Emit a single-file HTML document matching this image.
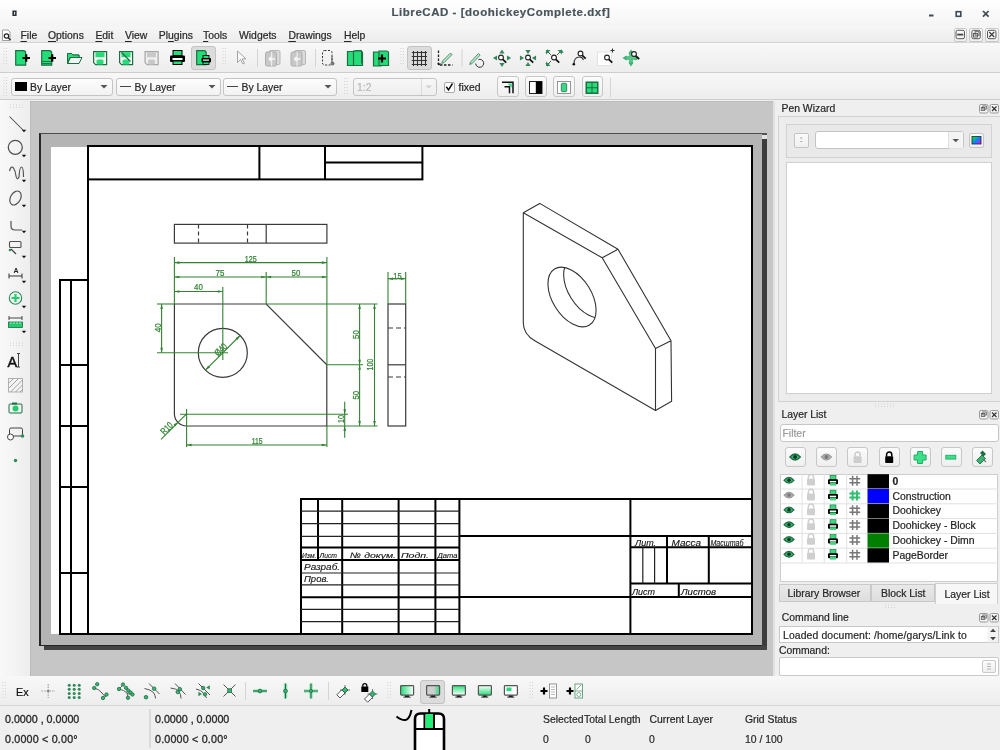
<!DOCTYPE html>
<html><head><meta charset="utf-8">
<style>
*{margin:0;padding:0;box-sizing:border-box}
html,body{width:1000px;height:750px;overflow:hidden;background:#efefef;font-family:"Liberation Sans",sans-serif;font-size:10.4px;color:#262626}
.a{position:absolute}
.t{position:absolute;white-space:pre;line-height:1;will-change:opacity;opacity:0.999;-webkit-text-stroke:0.2px currentColor}
u{text-decoration:underline;text-underline-offset:1.5px}
svg{position:absolute;left:0;top:0}
</style></head><body>
<div class="a" style="left:0px;top:0px;width:1000px;height:27px;background:linear-gradient(#ffffff,#f4f4f4)"></div>
<div class="a" style="left:0px;top:27px;width:1000px;height:16px;background:linear-gradient(#f6f6f6,#ececec);border-bottom:1px solid #d4d4d4"></div>
<div class="a" style="left:0px;top:43px;width:1000px;height:30px;background:linear-gradient(#f8f8f8,#ededed);border-bottom:1px solid #cdcdcd"></div>
<div class="a" style="left:0px;top:73px;width:1000px;height:27px;background:linear-gradient(#f8f8f8,#ededed);border-bottom:1px solid #cdcdcd"></div>
<div class="a" style="left:0px;top:100px;width:30px;height:576px;background:linear-gradient(90deg,#f9f9f9,#ededed)"></div>
<div class="a" style="left:30px;top:101px;width:743px;height:575px;background:#c6c6c6;border-left:1px solid #b9b9b9;border-top:1px solid #bdbdbd"></div>
<div class="a" style="left:773px;top:100px;width:227px;height:576px;background:#efefef"></div>
<div class="a" style="left:0px;top:676px;width:1000px;height:30px;background:linear-gradient(#f8f8f8,#ededed);border-bottom:1px solid #d0d0d0"></div>
<div class="a" style="left:0px;top:706px;width:1000px;height:44px;background:#efefef"></div>
<div class="t" style="left:391.5px;top:7.3px;font-size:11.5px;font-weight:bold;color:#48535b;letter-spacing:0.54px">LibreCAD - [doohickeyComplete.dxf]</div>
<div class="t" style="left:20.5px;top:30.6px;"><u>F</u>ile</div>
<div class="t" style="left:48px;top:30.6px;"><u>O</u>ptions</div>
<div class="t" style="left:95.4px;top:30.6px;"><u>E</u>dit</div>
<div class="t" style="left:125px;top:30.6px;"><u>V</u>iew</div>
<div class="t" style="left:158.8px;top:30.6px;">Pl<u>u</u>gins</div>
<div class="t" style="left:203px;top:30.6px;"><u>T</u>ools</div>
<div class="t" style="left:239px;top:30.6px;">Widgets</div>
<div class="t" style="left:288.4px;top:30.6px;"><u>D</u>rawings</div>
<div class="t" style="left:344px;top:30.6px;"><u>H</u>elp</div>
<div class="a" style="left:953.5px;top:27.5px;width:13.5px;height:14px;border:1px solid #c8c8c8;border-radius:2px;background:linear-gradient(#fdfdfd,#efefef)"></div>
<div class="a" style="left:969.3px;top:27.5px;width:13.5px;height:14px;border:1px solid #c8c8c8;border-radius:2px;background:linear-gradient(#fdfdfd,#efefef)"></div>
<div class="a" style="left:985px;top:27.5px;width:13.5px;height:14px;border:1px solid #c8c8c8;border-radius:2px;background:linear-gradient(#fdfdfd,#efefef)"></div>
<div class="a" style="left:190.5px;top:46.3px;width:25px;height:24px;border:1px solid #c3c3c3;border-radius:3px;background:#dcdcdc"></div>
<div class="a" style="left:407.3px;top:46.3px;width:24.5px;height:23.5px;border:1px solid #c3c3c3;border-radius:3px;background:#dcdcdc"></div>
<div class="a" style="left:10.8px;top:77.5px;width:102.5px;height:18.2px;border:1px solid #c4c4c4;border-radius:3px;background:linear-gradient(#fdfdfd,#f2f2f2)"></div>
<div class="a" style="left:15px;top:82px;width:12px;height:9px;background:#000"></div>
<div class="t" style="left:30px;top:82.7px;">By Layer</div>
<div class="a" style="left:115.5px;top:77.5px;width:105px;height:18.2px;border:1px solid #c4c4c4;border-radius:3px;background:linear-gradient(#fdfdfd,#f2f2f2)"></div>
<div class="t" style="left:134.5px;top:82.7px;">By Layer</div>
<div class="a" style="left:222.5px;top:77.5px;width:114.5px;height:18.2px;border:1px solid #c4c4c4;border-radius:3px;background:linear-gradient(#fdfdfd,#f2f2f2)"></div>
<div class="t" style="left:241.5px;top:82.7px;">By Layer</div>
<div class="a" style="left:352.6px;top:78.3px;width:84px;height:17.5px;border:1px solid #c4c4c4;border-radius:3px;background:linear-gradient(#f7f7f7,#eeeeee)"></div>
<div class="t" style="left:357px;top:82.5px;color:#b9b9b9">1:2</div>
<div class="a" style="left:444px;top:81.5px;width:11px;height:11px;border:1px solid #a9a9a9;border-radius:2px;background:#fff"></div>
<div class="t" style="left:458.5px;top:82.5px;">fixed</div>
<div class="a" style="left:497.4px;top:76.3px;width:21.2px;height:21px;border:1px solid #c7c7c7;border-radius:3px;background:linear-gradient(#fbfbfb,#f0f0f0)"></div>
<div class="a" style="left:525.4px;top:76.3px;width:21.2px;height:21px;border:1px solid #c7c7c7;border-radius:3px;background:linear-gradient(#fbfbfb,#f0f0f0)"></div>
<div class="a" style="left:553.4px;top:76.3px;width:21.2px;height:21px;border:1px solid #c7c7c7;border-radius:3px;background:linear-gradient(#fbfbfb,#f0f0f0)"></div>
<div class="a" style="left:581.5px;top:76.3px;width:21.2px;height:21px;border:1px solid #c7c7c7;border-radius:3px;background:linear-gradient(#fbfbfb,#f0f0f0)"></div>
<div class="a" style="left:39px;top:133px;width:723px;height:512.5px;background:#b4b4b4;border-left:2px solid #262626;border-top:1.5px solid #4d4d4d;border-bottom:1.5px solid #262626"></div>
<div class="a" style="left:762px;top:139px;width:5px;height:511px;background:#3c3c3c"></div>
<div class="a" style="left:44px;top:645.5px;width:723px;height:4.5px;background:#444"></div>
<div class="a" style="left:762px;top:133px;width:4.5px;height:1.5px;background:#555"></div>
<div class="a" style="left:762px;top:134.5px;width:4.5px;height:4.5px;background:#e2e2e2"></div>
<div class="a" style="left:51px;top:147px;width:701px;height:487px;background:#fff"></div>
<div class="t" style="left:781.5px;top:104px;">Pen Wizard</div>
<div class="a" style="left:778.3px;top:116.3px;width:222px;height:285.5px;border:1px solid #d2d2d2;border-right:none;background:#ececec"></div>
<div class="a" style="left:786.3px;top:123.6px;width:206px;height:34px;border:1px solid #d2d2d2;background:#e9e9e9"></div>
<div class="a" style="left:794px;top:133px;width:14.5px;height:14.5px;border:1px solid #c4c4c4;border-radius:2px;background:linear-gradient(#fbfbfb,#efefef)"></div>
<div class="a" style="left:814.5px;top:131.3px;width:149px;height:18.2px;border:1px solid #c4c4c4;border-radius:3px;background:#fff"></div>
<div class="a" style="left:969.2px;top:132.8px;width:15px;height:15px;border:1px solid #c4c4c4;border-radius:2px;background:linear-gradient(#fbfbfb,#efefef)"></div>
<div class="a" style="left:786.3px;top:162.2px;width:205.5px;height:232.2px;border:1px solid #cfcfcf;background:#fff"></div>
<div class="t" style="left:781.4px;top:410.3px;">Layer List</div>
<div class="a" style="left:780px;top:424px;width:219px;height:17.5px;border:1px solid #c7c7c7;border-radius:3px;background:#fff"></div>
<div class="t" style="left:782.5px;top:428.5px;color:#9a9a9a">Filter</div>
<div class="a" style="left:784.5px;top:446.8px;width:21.2px;height:20.6px;border:1px solid #c7c7c7;border-radius:3px;background:linear-gradient(#fbfbfb,#efefef)"></div>
<div class="a" style="left:815.8px;top:446.8px;width:21.2px;height:20.6px;border:1px solid #c7c7c7;border-radius:3px;background:linear-gradient(#fbfbfb,#efefef)"></div>
<div class="a" style="left:847px;top:446.8px;width:21.2px;height:20.6px;border:1px solid #c7c7c7;border-radius:3px;background:linear-gradient(#fbfbfb,#efefef)"></div>
<div class="a" style="left:878.6px;top:446.8px;width:21.2px;height:20.6px;border:1px solid #c7c7c7;border-radius:3px;background:linear-gradient(#fbfbfb,#efefef)"></div>
<div class="a" style="left:909.5px;top:446.8px;width:21.2px;height:20.6px;border:1px solid #c7c7c7;border-radius:3px;background:linear-gradient(#fbfbfb,#efefef)"></div>
<div class="a" style="left:940.5px;top:446.8px;width:21.2px;height:20.6px;border:1px solid #c7c7c7;border-radius:3px;background:linear-gradient(#fbfbfb,#efefef)"></div>
<div class="a" style="left:972.3px;top:446.8px;width:21.2px;height:20.6px;border:1px solid #c7c7c7;border-radius:3px;background:linear-gradient(#fbfbfb,#efefef)"></div>
<div class="a" style="left:780px;top:473.6px;width:217.5px;height:108px;border:1px solid #cdcdcd;background:#fff"></div>
<div class="t" style="left:892.5px;top:476.8px;font-weight:bold;color:#222">0</div>
<div class="t" style="left:892.5px;top:491.6px;color:#222">Construction</div>
<div class="t" style="left:892.5px;top:506.40000000000003px;color:#222">Doohickey</div>
<div class="t" style="left:892.5px;top:521.2px;color:#222">Doohickey - Block</div>
<div class="t" style="left:892.5px;top:536.0px;color:#222">Doohickey - Dimn</div>
<div class="t" style="left:892.5px;top:550.8000000000001px;color:#222">PageBorder</div>
<div class="a" style="left:778.5px;top:584px;width:92.5px;height:17.5px;border:1px solid #c9c9c9;background:linear-gradient(#e9e9e9,#dedede)"></div>
<div class="a" style="left:871px;top:584px;width:64px;height:17.5px;border:1px solid #c9c9c9;background:linear-gradient(#e9e9e9,#dedede)"></div>
<div class="a" style="left:935px;top:583px;width:63px;height:21px;border:1px solid #cfcfcf;border-bottom:none;background:#f7f7f7"></div>
<div class="t" style="left:787.5px;top:589px;">Library Browser</div>
<div class="t" style="left:881px;top:589px;">Block List</div>
<div class="t" style="left:944.5px;top:590px;">Layer List</div>
<div class="t" style="left:781.8px;top:612.9px;">Command line</div>
<div class="a" style="left:779px;top:626px;width:219.5px;height:17px;border:1px solid #c9c9c9;background:#fff"></div>
<div class="t" style="left:783px;top:630.8px;letter-spacing:0.12px">Loaded document: /home/garys/Link to</div>
<div class="t" style="left:779px;top:646px;">Command:</div>
<div class="a" style="left:779px;top:657px;width:219.5px;height:18.5px;border:1px solid #c9c9c9;border-radius:2px;background:#fff"></div>
<div class="a" style="left:982px;top:660px;width:14px;height:13px;border:1px solid #c9c9c9;border-radius:2px;background:linear-gradient(#fbfbfb,#efefef)"></div>
<div class="t" style="left:16px;top:686.5px;font-size:10.8px;color:#111">Ex</div>
<div class="a" style="left:420.4px;top:680px;width:24.6px;height:23.5px;border:1px solid #c3c3c3;border-radius:3px;background:#dcdcdc"></div>
<div class="t" style="left:5px;top:714.2px;font-size:10.7px;color:#2e2e2e;-webkit-text-stroke:0.35px #2e2e2e">0.0000 , 0.0000</div>
<div class="t" style="left:5px;top:733.5px;font-size:10.7px;color:#2e2e2e;-webkit-text-stroke:0.35px #2e2e2e;letter-spacing:0.2px">0.0000 &lt; 0.00°</div>
<div class="t" style="left:155px;top:714.2px;font-size:10.7px;color:#2e2e2e;-webkit-text-stroke:0.35px #2e2e2e">0.0000 , 0.0000</div>
<div class="t" style="left:155px;top:733.5px;font-size:10.7px;color:#2e2e2e;-webkit-text-stroke:0.35px #2e2e2e;letter-spacing:0.2px">0.0000 &lt; 0.00°</div>
<div class="t" style="left:543px;top:714.5px;font-size:10.4px;color:#262626">Selected</div>
<div class="t" style="left:584px;top:714.5px;font-size:10.4px;color:#262626">Total Length</div>
<div class="t" style="left:649.5px;top:714.5px;font-size:10.4px;color:#262626">Current Layer</div>
<div class="t" style="left:745px;top:714.5px;font-size:10.4px;color:#262626">Grid Status</div>
<div class="t" style="left:543px;top:734.5px;font-size:10.4px;color:#262626">0</div>
<div class="t" style="left:585px;top:734.5px;font-size:10.4px;color:#262626">0</div>
<div class="t" style="left:649px;top:734.5px;font-size:10.4px;color:#262626">0</div>
<div class="t" style="left:745px;top:734.5px;font-size:10.4px;color:#262626">10 / 100</div>
<svg width="1000" height="750" viewBox="0 0 1000 750">
<rect x="12.4" y="10.5" width="4.2" height="5.5" fill="#2b3035"/><rect x="14" y="12" width="1.1" height="2.6" fill="#ddd"/>
<rect x="929" y="14.5" width="4.5" height="2" fill="#3f4a52"/>
<rect x="956.2" y="11.7" width="4.6" height="4.6" fill="none" stroke="#3f4a52" stroke-width="1.6"/>
<path d="M983,11 L988.6,16.6 M988.6,11 L983,16.6" stroke="#3f4a52" stroke-width="1.7"/>
<path d="M2.5,30 h5.5 l2,2 v8.5 h-7.5 z" fill="#fff" stroke="#888" stroke-width="0.8"/>
<circle cx="6.5" cy="36" r="2.2" fill="none" stroke="#222" stroke-width="1.2"/><path d="M8,37.5 l2.5,2.5" stroke="#222" stroke-width="1.4"/>
<rect x="956.05" y="30.3" width="8.4" height="8.4" rx="1.5" fill="none" stroke="#555" stroke-width="1"/>
<rect x="957.25" y="33.7" width="6" height="1.8" fill="#444"/>
<rect x="971.8499999999999" y="30.3" width="8.4" height="8.4" rx="1.5" fill="none" stroke="#555" stroke-width="1"/>
<rect x="973.55" y="33.5" width="4" height="3.5" fill="none" stroke="#555" stroke-width="0.9"/><rect x="975.05" y="31.7" width="4" height="3.5" fill="none" stroke="#555" stroke-width="0.9"/>
<rect x="987.55" y="30.3" width="8.4" height="8.4" rx="1.5" fill="none" stroke="#555" stroke-width="1"/>
<path d="M989.25,32.0 L994.25,37.0 M994.25,32.0 L989.25,37.0" stroke="#444" stroke-width="1.3"/>
<rect x="3.5" y="48" width="1" height="1" fill="#d2d2d2"/><rect x="6" y="48" width="1" height="1" fill="#d2d2d2"/>
<rect x="3.5" y="51" width="1" height="1" fill="#d2d2d2"/><rect x="6" y="51" width="1" height="1" fill="#d2d2d2"/>
<rect x="3.5" y="54" width="1" height="1" fill="#d2d2d2"/><rect x="6" y="54" width="1" height="1" fill="#d2d2d2"/>
<rect x="3.5" y="57" width="1" height="1" fill="#d2d2d2"/><rect x="6" y="57" width="1" height="1" fill="#d2d2d2"/>
<rect x="3.5" y="60" width="1" height="1" fill="#d2d2d2"/><rect x="6" y="60" width="1" height="1" fill="#d2d2d2"/>
<rect x="3.5" y="63" width="1" height="1" fill="#d2d2d2"/><rect x="6" y="63" width="1" height="1" fill="#d2d2d2"/>
<path d="M15.7,50.7 h7.5 q2.5,0 2.5,2.5 v12 h-10 z" fill="#24dd78" stroke="#1d6e43" stroke-width="1.2"/>
<path d="M22.5,58 h7.5 M26.2,54.3 v7.5" stroke="#000" stroke-width="2.2"/>
<path d="M41.7,50.7 h7.5 q2.5,0 2.5,2.5 v12 h-10 z" fill="#24dd78" stroke="#1d6e43" stroke-width="1.2"/>
<path d="M42,61.5 h9 M42,63.5 h9" stroke="#1d6e43" stroke-width="0.9"/>
<path d="M48.5,58 h7.5 M52.2,54.3 v7.5" stroke="#000" stroke-width="2.2"/>
<path d="M67.5,63.5 v-10 h4 l1.5,1.5 h6 v3" fill="#24dd78" stroke="#1d6e43" stroke-width="1"/>
<path d="M67.5,63.5 l3,-6 h11.5 l-3,6 z" fill="#f4f4f4" stroke="#1d6e43" stroke-width="1"/>
<path d="M67.5,63.5 v-10 h4 l1.5,1.5 h6 v2.5 h-9 z" fill="#24dd78" stroke="#1d6e43" stroke-width="1"/>
<path d="M93.6,51.6 h13 v13 h-11 l-2,-2 z" fill="#f4f4f4" stroke="#1d6e43" stroke-width="1.2"/>
<rect x="95.5" y="52.2" width="9" height="5" fill="#24dd78"/>
<rect x="96.5" y="59.5" width="7" height="5" rx="1.5" fill="#24dd78"/>
<path d="M119.6,51.6 h13 v13 h-11 l-2,-2 z" fill="#f4f4f4" stroke="#1d6e43" stroke-width="1.2"/>
<rect x="121.5" y="52.2" width="9" height="5" fill="#24dd78"/>
<rect x="122.5" y="59.5" width="7" height="5" rx="1.5" fill="#24dd78"/>
<path d="M121.5,52.5 l9,9" stroke="#1d6e43" stroke-width="1.2"/>
<path d="M145.1,51.6 h13 v13 h-11 l-2,-2 z" fill="#f0f0f0" stroke="#a6a6a6" stroke-width="1.2"/>
<rect x="147.0" y="52.2" width="9" height="5" fill="#c9c9c9"/>
<rect x="148.0" y="59.5" width="7" height="5" rx="1.5" fill="#c9c9c9"/>
<rect x="173" y="50.5" width="9" height="5" fill="#24dd78" stroke="#000" stroke-width="1"/>
<rect x="170" y="55.5" width="15" height="6.5" rx="1" fill="#000"/>
<rect x="172.5" y="58" width="10" height="2" fill="#fff"/>
<rect x="173" y="61" width="9" height="3.5" fill="#24dd78" stroke="#000" stroke-width="1"/>
<path d="M196.7,50.7 h7 q2.5,0 2.5,2.5 v11.5 h-9.5 z" fill="#24dd78" stroke="#1d6e43" stroke-width="1.2"/>
<rect x="203" y="55.5" width="6" height="3" fill="#24dd78" stroke="#000" stroke-width="0.9"/><rect x="201.5" y="58" width="9.5" height="4.5" rx="1" fill="#000"/><rect x="203" y="59.5" width="6" height="1.2" fill="#fff"/><rect x="203" y="62" width="6" height="2.5" fill="#24dd78" stroke="#000" stroke-width="0.8"/>
<rect x="222.5" y="48" width="1" height="1" fill="#d2d2d2"/><rect x="225" y="48" width="1" height="1" fill="#d2d2d2"/>
<rect x="222.5" y="51" width="1" height="1" fill="#d2d2d2"/><rect x="225" y="51" width="1" height="1" fill="#d2d2d2"/>
<rect x="222.5" y="54" width="1" height="1" fill="#d2d2d2"/><rect x="225" y="54" width="1" height="1" fill="#d2d2d2"/>
<rect x="222.5" y="57" width="1" height="1" fill="#d2d2d2"/><rect x="225" y="57" width="1" height="1" fill="#d2d2d2"/>
<rect x="222.5" y="60" width="1" height="1" fill="#d2d2d2"/><rect x="225" y="60" width="1" height="1" fill="#d2d2d2"/>
<rect x="222.5" y="63" width="1" height="1" fill="#d2d2d2"/><rect x="225" y="63" width="1" height="1" fill="#d2d2d2"/>
<path d="M237.5,51 v11.5 l3,-3 l2.5,4.5 l1.5,-0.8 l-2.5,-4.3 h4 z" fill="#fafafa" stroke="#9a9a9a" stroke-width="0.9"/>
<rect x="257" y="49" width="1" height="18" fill="#d4d4d4"/>
<rect x="269" y="50.5" width="11" height="14" rx="1.5" fill="#dcdcdc" stroke="#b5b5b5" stroke-width="1"/>
<rect x="265.5" y="52" width="11" height="14" rx="1.5" fill="#c8c8c8" stroke="#adadad" stroke-width="1"/>
<rect x="271" y="52" width="1.2" height="14" fill="#eee"/>
<path d="M269,59 h6 M269,59 l2,-2 M269,59 l2,2" stroke="#f6f6f6" stroke-width="1.6"/>
<rect x="294.5" y="50.5" width="11" height="14" rx="1.5" fill="#dcdcdc" stroke="#b5b5b5" stroke-width="1"/>
<rect x="291.0" y="52" width="11" height="14" rx="1.5" fill="#c8c8c8" stroke="#adadad" stroke-width="1"/>
<rect x="296.5" y="52" width="1.2" height="14" fill="#eee"/>
<path d="M294.5,59 h6 M294.5,59 l2,-2 M294.5,59 l2,2" stroke="#f6f6f6" stroke-width="1.6"/>
<rect x="315" y="49" width="1" height="18" fill="#d4d4d4"/>
<rect x="322.5" y="50.5" width="9.5" height="14.5" rx="2" fill="none" stroke="#333" stroke-width="1" stroke-dasharray="2,1.5"/>
<path d="M332,56 v6" stroke="#555" stroke-width="1"/><circle cx="332.5" cy="63.5" r="2" fill="#777"/>
<path d="M347.5,51.5 h6 v14 h-6 z M353.5,51 h7 q2,0 2,2 v12.5 h-9 z" fill="#24dd78" stroke="#1d6e43" stroke-width="1.2"/>
<path d="M353.5,51.5 l2,-1 h6 v13" fill="none" stroke="#1d6e43" stroke-width="1"/>
<path d="M373.5,52 h7.5 v14 h-7.5 z" fill="#24dd78" stroke="#1d6e43" stroke-width="1.2"/>
<path d="M379,51 h7.5 q2,0 2,2 v12.5 h-9.5 z" fill="#24dd78" stroke="#1d6e43" stroke-width="1.2"/>
<path d="M378,58.5 h8 M382,54.5 v8" stroke="#000" stroke-width="2.2"/>
<rect x="400.5" y="48" width="1" height="1" fill="#d2d2d2"/><rect x="403" y="48" width="1" height="1" fill="#d2d2d2"/>
<rect x="400.5" y="51" width="1" height="1" fill="#d2d2d2"/><rect x="403" y="51" width="1" height="1" fill="#d2d2d2"/>
<rect x="400.5" y="54" width="1" height="1" fill="#d2d2d2"/><rect x="403" y="54" width="1" height="1" fill="#d2d2d2"/>
<rect x="400.5" y="57" width="1" height="1" fill="#d2d2d2"/><rect x="403" y="57" width="1" height="1" fill="#d2d2d2"/>
<rect x="400.5" y="60" width="1" height="1" fill="#d2d2d2"/><rect x="403" y="60" width="1" height="1" fill="#d2d2d2"/>
<rect x="400.5" y="63" width="1" height="1" fill="#d2d2d2"/><rect x="403" y="63" width="1" height="1" fill="#d2d2d2"/>
<path d="M413.5,51 v15 M411.8,52.5 h15.2" stroke="#333" stroke-width="1.05"/>
<path d="M417.5,51 v15 M411.8,56.5 h15.2" stroke="#333" stroke-width="1.05"/>
<path d="M421.5,51 v15 M411.8,60.5 h15.2" stroke="#333" stroke-width="1.05"/>
<path d="M425.5,51 v15 M411.8,64.5 h15.2" stroke="#333" stroke-width="1.05"/>
<path d="M438.5,50.5 v14.5 h14" fill="none" stroke="#222" stroke-width="1.3" stroke-dasharray="2.5,1.5"/>
<path d="M437,63.5 l2,2 l2,-2 z" fill="#111"/>
<path d="M442.5,61 l8,-8 l1.6,1.6 l-8,8 l-2.4,0.8 z" fill="#b5e8cb" stroke="#3a7a58" stroke-width="0.8"/>
<rect x="461.5" y="49" width="1" height="18" fill="#d4d4d4"/>
<path d="M470.5,62 l8,-8.5 l1.6,1.6 l-8,8.5 l-2.4,0.8 z" fill="#b5e8cb" stroke="#3a7a58" stroke-width="0.8"/>
<path d="M478.5,59.5 a4,4 0 1 1 -2.8,4" fill="none" stroke="#333" stroke-width="1"/>
<polygon points="502,49.4 499.4,53.56 504.6,53.56" fill="#2e8b57"/>
<polygon points="502,67.1 499.4,62.94 504.6,62.94" fill="#2e8b57"/>
<polygon points="492.9,58 497.06,55.4 497.06,60.6" fill="#2e8b57"/>
<polygon points="511.1,58 506.94,55.4 506.94,60.6" fill="#2e8b57"/>
<circle cx="501" cy="57.5" r="2.4" fill="#fff" stroke="#222" stroke-width="1.1"/><path d="M502.8,59.3 l3.4,3.4" stroke="#111" stroke-width="1.7"/>
<polygon points="528,54.1 525.4,49.94 530.6,49.94" fill="#2e8b57"/>
<polygon points="528,61.9 525.4,66.06 530.6,66.06" fill="#2e8b57"/>
<polygon points="524.1,58 519.94,55.4 519.94,60.6" fill="#2e8b57"/>
<polygon points="531.9,58 536.06,55.4 536.06,60.6" fill="#2e8b57"/>
<circle cx="528" cy="57.5" r="2.4" fill="#fff" stroke="#222" stroke-width="1.1"/><path d="M529.8,59.3 l3.4,3.4" stroke="#111" stroke-width="1.7"/>
<path d="M547,51 l4,4 M561,51 l-4,4 M547,65 l4,-4" stroke="#555" stroke-width="1"/>
<polygon points="547.5,49.3 545.3,52.82 549.7,52.82" fill="#2e8b57"/>
<polygon points="561.5,49.3 559.3,52.82 563.7,52.82" fill="#2e8b57"/>
<polygon points="547.5,66.7 545.3,63.18 549.7,63.18" fill="#2e8b57"/>
<polygon points="546,50 550.5,50 546,54.5" fill="#2e8b57"/><polygon points="562,50 557.5,50 562,54.5" fill="#2e8b57"/><polygon points="546,66 550.5,66 546,61.5" fill="#2e8b57"/>
<circle cx="554" cy="57.5" r="2.4" fill="#fff" stroke="#222" stroke-width="1.1"/><path d="M555.8,59.3 l3.4,3.4" stroke="#111" stroke-width="1.7"/>
<path d="M574,64 q0,-7 5.5,-7 q3,0 4,3" fill="none" stroke="#333" stroke-width="1.1"/><circle cx="573.8" cy="64.3" r="1.3" fill="#111"/>
<circle cx="580.5" cy="53.5" r="2.4" fill="#fff" stroke="#222" stroke-width="1.1"/><path d="M582.3,55.3 l3.4,3.4" stroke="#111" stroke-width="1.7"/>
<rect x="597.5" y="52" width="14" height="13.5" fill="#fff" stroke="#ddd" stroke-width="0.8"/>
<circle cx="607" cy="57.5" r="2.4" fill="#fff" stroke="#222" stroke-width="1.1"/><path d="M608.8,59.3 l3.4,3.4" stroke="#111" stroke-width="1.7"/>
<path d="M610.5,50.5 h4 M612.5,48.5 v4" stroke="#333" stroke-width="1"/>
<path d="M625,58 h12 M631,52 v12" stroke="#5ac48a" stroke-width="4"/>
<polygon points="622.4,58 626.56,55.4 626.56,60.6" fill="#3cb371"/>
<polygon points="639.6,58 635.44,55.4 635.44,60.6" fill="#3cb371"/>
<polygon points="631,49.4 628.4,53.56 633.6,53.56" fill="#3cb371"/>
<polygon points="631,66.6 628.4,62.44 633.6,62.44" fill="#3cb371"/>
<circle cx="634" cy="54" r="2.4" fill="#fff" stroke="#222" stroke-width="1.1"/><path d="M635.8,55.8 l3.4,3.4" stroke="#111" stroke-width="1.7"/>
<rect x="3.5" y="77" width="1" height="1" fill="#d2d2d2"/><rect x="6" y="77" width="1" height="1" fill="#d2d2d2"/>
<rect x="3.5" y="80" width="1" height="1" fill="#d2d2d2"/><rect x="6" y="80" width="1" height="1" fill="#d2d2d2"/>
<rect x="3.5" y="83" width="1" height="1" fill="#d2d2d2"/><rect x="6" y="83" width="1" height="1" fill="#d2d2d2"/>
<rect x="3.5" y="86" width="1" height="1" fill="#d2d2d2"/><rect x="6" y="86" width="1" height="1" fill="#d2d2d2"/>
<rect x="3.5" y="89" width="1" height="1" fill="#d2d2d2"/><rect x="6" y="89" width="1" height="1" fill="#d2d2d2"/>
<rect x="3.5" y="92" width="1" height="1" fill="#d2d2d2"/><rect x="6" y="92" width="1" height="1" fill="#d2d2d2"/>
<rect x="3.5" y="95" width="1" height="1" fill="#d2d2d2"/><rect x="6" y="95" width="1" height="1" fill="#d2d2d2"/>
<polygon points="100.5,85 107.5,85 104,88.5" fill="#555"/>
<rect x="120" y="86" width="11" height="1" fill="#444"/>
<polygon points="208.5,85 215.5,85 212,88.5" fill="#555"/>
<rect x="227" y="86" width="11" height="1" fill="#444"/>
<polygon points="324.5,85 331.5,85 328,88.5" fill="#555"/>
<rect x="344.1" y="78" width="1" height="1" fill="#d2d2d2"/><rect x="346.6" y="78" width="1" height="1" fill="#d2d2d2"/>
<rect x="344.1" y="81" width="1" height="1" fill="#d2d2d2"/><rect x="346.6" y="81" width="1" height="1" fill="#d2d2d2"/>
<rect x="344.1" y="84" width="1" height="1" fill="#d2d2d2"/><rect x="346.6" y="84" width="1" height="1" fill="#d2d2d2"/>
<rect x="344.1" y="87" width="1" height="1" fill="#d2d2d2"/><rect x="346.6" y="87" width="1" height="1" fill="#d2d2d2"/>
<rect x="344.1" y="90" width="1" height="1" fill="#d2d2d2"/><rect x="346.6" y="90" width="1" height="1" fill="#d2d2d2"/>
<rect x="344.1" y="93" width="1" height="1" fill="#d2d2d2"/><rect x="346.6" y="93" width="1" height="1" fill="#d2d2d2"/>
<rect x="421" y="79" width="1" height="16" fill="#dadada"/>
<polygon points="425.5,85.5 432,85.5 428.8,88.5" fill="#cfcfcf"/>
<path d="M446.3,86.8 l2.2,3 l4,-6.3" fill="none" stroke="#111" stroke-width="1.5"/>
<path d="M502,82.2 h11 v11" fill="none" stroke="#111" stroke-width="1.5"/><path d="M504.5,86.7 h5 v6.5" fill="none" stroke="#111" stroke-width="1.5"/><polygon points="507.5,83.5 511.8,83.5 511.8,87.8" fill="#3cd68a"/>
<rect x="529.5" y="81.5" width="12.5" height="12" fill="#fff" stroke="#222" stroke-width="1"/><rect x="535.8" y="81.5" width="6.2" height="12" fill="#000"/>
<rect x="557.5" y="81.5" width="13" height="12" fill="#fff" stroke="#8a8a8a" stroke-width="0.9"/><rect x="561.3" y="83.3" width="5.4" height="8.4" rx="1.2" fill="#3cd68a" stroke="#1d6e43" stroke-width="0.8"/>
<rect x="585.5" y="81.5" width="13" height="12.5" fill="#1d6e43"/><rect x="587" y="83" width="4.5" height="4.2" fill="#24dd78"/><rect x="592.5" y="83" width="4.5" height="4.2" fill="#24dd78"/><rect x="587" y="88.3" width="4.5" height="4.2" fill="#24dd78"/><rect x="592.5" y="88.3" width="4.5" height="4.2" fill="#24dd78"/>
<rect x="610" y="78" width="1" height="19" fill="#d4d4d4"/>
<rect x="88" y="146" width="664" height="488" fill="none" stroke="#000" stroke-width="2"/>
<rect x="88" y="146" width="334.4" height="33.4" fill="none" stroke="#000" stroke-width="2"/>
<line x1="259.4" y1="146" x2="259.4" y2="179.4" stroke="#000" stroke-width="2"/>
<line x1="325" y1="146" x2="325" y2="179.4" stroke="#000" stroke-width="2"/>
<line x1="325" y1="162.4" x2="422.4" y2="162.4" stroke="#000" stroke-width="2"/>
<rect x="60" y="280" width="28" height="354" fill="none" stroke="#000" stroke-width="2"/>
<line x1="71" y1="280" x2="71" y2="634" stroke="#000" stroke-width="2"/>
<line x1="60" y1="365" x2="88" y2="365" stroke="#000" stroke-width="2"/>
<line x1="60" y1="426" x2="88" y2="426" stroke="#000" stroke-width="2"/>
<line x1="60" y1="487" x2="88" y2="487" stroke="#000" stroke-width="2"/>
<line x1="60" y1="573" x2="88" y2="573" stroke="#000" stroke-width="2"/>
<rect x="301" y="499" width="451" height="135" fill="none" stroke="#000" stroke-width="2"/>
<line x1="318" y1="499" x2="318" y2="560" stroke="#000" stroke-width="2"/>
<line x1="342.2" y1="499" x2="342.2" y2="634" stroke="#000" stroke-width="2"/>
<line x1="398.6" y1="499" x2="398.6" y2="634" stroke="#000" stroke-width="2"/>
<line x1="435.4" y1="499" x2="435.4" y2="634" stroke="#000" stroke-width="2"/>
<line x1="459.4" y1="499" x2="459.4" y2="634" stroke="#000" stroke-width="2"/>
<line x1="630.4" y1="499" x2="630.4" y2="634" stroke="#000" stroke-width="2"/>
<line x1="301" y1="511.2" x2="459.4" y2="511.2" stroke="#222" stroke-width="1.2"/>
<line x1="301" y1="523.6" x2="459.4" y2="523.6" stroke="#222" stroke-width="1.2"/>
<line x1="301" y1="536.3" x2="459.4" y2="536.3" stroke="#222" stroke-width="1.2"/>
<line x1="301" y1="573" x2="459.4" y2="573" stroke="#222" stroke-width="1.2"/>
<line x1="301" y1="584.8" x2="459.4" y2="584.8" stroke="#222" stroke-width="1.2"/>
<line x1="301" y1="609.4" x2="459.4" y2="609.4" stroke="#222" stroke-width="1.2"/>
<line x1="301" y1="621.6" x2="459.4" y2="621.6" stroke="#222" stroke-width="1.2"/>
<line x1="301" y1="547.6" x2="459.4" y2="547.6" stroke="#000" stroke-width="2"/>
<line x1="301" y1="560" x2="459.4" y2="560" stroke="#000" stroke-width="2"/>
<line x1="301" y1="597.2" x2="459.4" y2="597.2" stroke="#000" stroke-width="2"/>
<line x1="459.4" y1="535.9" x2="752" y2="535.9" stroke="#000" stroke-width="2"/>
<line x1="459.4" y1="597" x2="752" y2="597" stroke="#000" stroke-width="2"/>
<line x1="630.4" y1="547.3" x2="752" y2="547.3" stroke="#000" stroke-width="2"/>
<line x1="630.4" y1="583.6" x2="752" y2="583.6" stroke="#000" stroke-width="2"/>
<line x1="667" y1="536" x2="667" y2="583.6" stroke="#000" stroke-width="2"/>
<line x1="708.8" y1="536" x2="708.8" y2="583.6" stroke="#000" stroke-width="2"/>
<line x1="642.8" y1="547.3" x2="642.8" y2="583.6" stroke="#222" stroke-width="1.2"/>
<line x1="654.6" y1="547.3" x2="654.6" y2="583.6" stroke="#222" stroke-width="1.2"/>
<line x1="678.8" y1="583.6" x2="678.8" y2="597" stroke="#000" stroke-width="2"/>
<text x="302" y="557.5" font-size="7.6" font-style="italic" fill="#111" stroke="#111" stroke-width="0.12" textLength="14.5" lengthAdjust="spacingAndGlyphs" font-family="Liberation Sans">Изм.</text>
<text x="319.5" y="557.5" font-size="7.6" font-style="italic" fill="#111" stroke="#111" stroke-width="0.12" textLength="17.5" lengthAdjust="spacingAndGlyphs" font-family="Liberation Sans">Лист</text>
<text x="350" y="557.5" font-size="8" font-style="italic" fill="#111" stroke="#111" stroke-width="0.12" textLength="46" lengthAdjust="spacingAndGlyphs" font-family="Liberation Sans">№  докум.</text>
<text x="401" y="557.5" font-size="8" font-style="italic" fill="#111" stroke="#111" stroke-width="0.12" textLength="28" lengthAdjust="spacingAndGlyphs" font-family="Liberation Sans">Подп.</text>
<text x="437.5" y="557.5" font-size="7.6" font-style="italic" fill="#111" stroke="#111" stroke-width="0.12" textLength="20" lengthAdjust="spacingAndGlyphs" font-family="Liberation Sans">Дата</text>
<text x="304" y="569.8" font-size="8.8" font-style="italic" fill="#111" stroke="#111" stroke-width="0.12" textLength="36" lengthAdjust="spacingAndGlyphs" font-family="Liberation Sans">Разраб.</text>
<text x="304" y="581.5" font-size="8.8" font-style="italic" fill="#111" stroke="#111" stroke-width="0.12" textLength="25" lengthAdjust="spacingAndGlyphs" font-family="Liberation Sans">Пров.</text>
<text x="635" y="545.8" font-size="8.2" font-style="italic" fill="#111" stroke="#111" stroke-width="0.12" textLength="21" lengthAdjust="spacingAndGlyphs" font-family="Liberation Sans">Лит.</text>
<text x="671.6" y="545.8" font-size="8.2" font-style="italic" fill="#111" stroke="#111" stroke-width="0.12" textLength="29.5" lengthAdjust="spacingAndGlyphs" font-family="Liberation Sans">Масса</text>
<text x="710.4" y="545.8" font-size="8.2" font-style="italic" fill="#111" stroke="#111" stroke-width="0.12" textLength="33" lengthAdjust="spacingAndGlyphs" font-family="Liberation Sans">Масштаб</text>
<text x="632" y="594.8" font-size="8.2" font-style="italic" fill="#111" stroke="#111" stroke-width="0.12" textLength="23" lengthAdjust="spacingAndGlyphs" font-family="Liberation Sans">Лист</text>
<text x="681" y="594.8" font-size="8.2" font-style="italic" fill="#111" stroke="#111" stroke-width="0.12" textLength="35" lengthAdjust="spacingAndGlyphs" font-family="Liberation Sans">Листов</text>
<path d="M174.4,304 L266.2,304 L326.8,364.8 L326.8,426 L186.6,426 A12.2,12.2 0 0 1 174.4,413.8 Z" fill="none" stroke="#3a3a3a" stroke-width="1.2"/>
<circle cx="222.8" cy="352.8" r="24.5" fill="none" stroke="#3a3a3a" stroke-width="1.2"/>
<rect x="174.4" y="224.4" width="152.5" height="18.7" fill="none" stroke="#3a3a3a" stroke-width="1.2"/>
<line x1="198.5" y1="224.4" x2="198.5" y2="243.1" stroke="#3a3a3a" stroke-width="1.2" stroke-dasharray="4,3"/>
<line x1="247.5" y1="224.4" x2="247.5" y2="243.1" stroke="#3a3a3a" stroke-width="1.2" stroke-dasharray="4,3"/>
<line x1="266.2" y1="224.4" x2="266.2" y2="243.1" stroke="#3a3a3a" stroke-width="1.2"/>
<rect x="388" y="304" width="17.7" height="122" fill="none" stroke="#3a3a3a" stroke-width="1.2"/>
<line x1="388" y1="364.8" x2="405.7" y2="364.8" stroke="#3a3a3a" stroke-width="1.2"/>
<line x1="388" y1="328" x2="405.7" y2="328" stroke="#3a3a3a" stroke-width="1.2" stroke-dasharray="5,3"/>
<line x1="388" y1="377" x2="405.7" y2="377" stroke="#3a3a3a" stroke-width="1.2" stroke-dasharray="5,3"/>
<line x1="174.4" y1="262.6" x2="326.9" y2="262.6" stroke="#338233" stroke-width="1.1"/>
<polygon points="174.4,262.6 179.4,261.3 179.4,263.9" fill="#338233"/>
<polygon points="326.9,262.6 321.9,263.9 321.9,261.3" fill="#338233"/>
<text x="250.7" y="261.8" font-size="9.6" fill="#338233" text-anchor="middle" stroke="#338233" stroke-width="0.25" font-family="Liberation Sans" textLength="12.0" lengthAdjust="spacingAndGlyphs">125</text>
<line x1="174.4" y1="257" x2="174.4" y2="304" stroke="#338233" stroke-width="1.1"/>
<line x1="326.9" y1="257" x2="326.9" y2="364.8" stroke="#338233" stroke-width="1.1"/>
<line x1="326.9" y1="426" x2="326.9" y2="447" stroke="#338233" stroke-width="1.1"/>
<line x1="174.4" y1="277" x2="326.9" y2="277" stroke="#338233" stroke-width="1.1"/>
<polygon points="174.4,277.0 179.4,275.7 179.4,278.3" fill="#338233"/>
<polygon points="266.2,277.0 261.2,278.3 261.2,275.7" fill="#338233"/>
<polygon points="266.2,277.0 271.2,275.7 271.2,278.3" fill="#338233"/>
<polygon points="326.9,277.0 321.9,278.3 321.9,275.7" fill="#338233"/>
<text x="220" y="275.8" font-size="9.6" fill="#338233" text-anchor="middle" stroke="#338233" stroke-width="0.25" font-family="Liberation Sans" textLength="8.8" lengthAdjust="spacingAndGlyphs">75</text>
<text x="296" y="275.8" font-size="9.6" fill="#338233" text-anchor="middle" stroke="#338233" stroke-width="0.25" font-family="Liberation Sans" textLength="8.8" lengthAdjust="spacingAndGlyphs">50</text>
<line x1="266.2" y1="272" x2="266.2" y2="304" stroke="#338233" stroke-width="1.1"/>
<line x1="174.4" y1="291.5" x2="222.8" y2="291.5" stroke="#338233" stroke-width="1.1"/>
<polygon points="174.4,291.5 179.4,290.2 179.4,292.8" fill="#338233"/>
<polygon points="222.8,291.5 217.8,292.8 217.8,290.2" fill="#338233"/>
<text x="198.5" y="290.2" font-size="9.6" fill="#338233" text-anchor="middle" stroke="#338233" stroke-width="0.25" font-family="Liberation Sans" textLength="8.8" lengthAdjust="spacingAndGlyphs">40</text>
<line x1="222.8" y1="287" x2="222.8" y2="360" stroke="#338233" stroke-width="1.1"/>
<line x1="161.6" y1="304" x2="161.6" y2="352.8" stroke="#338233" stroke-width="1.1"/>
<polygon points="161.6,304.0 162.9,309.0 160.3,309.0" fill="#338233"/>
<polygon points="161.6,352.8 160.3,347.8 162.9,347.8" fill="#338233"/>
<text x="161" y="327.8" font-size="9.6" fill="#338233" text-anchor="middle" transform="rotate(-90 161 327.8)" stroke="#338233" stroke-width="0.25" font-family="Liberation Sans" textLength="8.8" lengthAdjust="spacingAndGlyphs">40</text>
<line x1="157" y1="304" x2="174.4" y2="304" stroke="#338233" stroke-width="1.1"/>
<line x1="326.8" y1="304" x2="377.6" y2="304" stroke="#338233" stroke-width="1.1"/>
<line x1="266.2" y1="304" x2="326.8" y2="304" stroke="#338233" stroke-width="1.1"/>
<line x1="157" y1="352.8" x2="228" y2="352.8" stroke="#338233" stroke-width="1.1"/>
<line x1="205.5" y1="370.1" x2="240.1" y2="335.5" stroke="#338233" stroke-width="1.1"/>
<polygon points="205.5,370.1 208.1,365.6 210.0,367.5" fill="#338233"/>
<polygon points="240.1,335.5 237.5,340.0 235.6,338.1" fill="#338233"/>
<text x="223.1" y="351.9" font-size="9.6" fill="#338233" text-anchor="middle" transform="rotate(-45 223.1 351.9)" stroke="#338233" stroke-width="0.25" font-family="Liberation Sans" textLength="13.8" lengthAdjust="spacingAndGlyphs">Ø40</text>
<line x1="359.6" y1="304" x2="359.6" y2="426" stroke="#338233" stroke-width="1.1"/>
<polygon points="359.6,304.0 360.9,309.0 358.3,309.0" fill="#338233"/>
<polygon points="359.6,364.8 358.3,359.8 360.9,359.8" fill="#338233"/>
<polygon points="359.6,364.8 360.9,369.8 358.3,369.8" fill="#338233"/>
<polygon points="359.6,426.0 358.3,421.0 360.9,421.0" fill="#338233"/>
<text x="358.8" y="334.5" font-size="9.6" fill="#338233" text-anchor="middle" transform="rotate(-90 358.8 334.5)" stroke="#338233" stroke-width="0.25" font-family="Liberation Sans" textLength="8.8" lengthAdjust="spacingAndGlyphs">50</text>
<text x="358.8" y="395.2" font-size="9.6" fill="#338233" text-anchor="middle" transform="rotate(-90 358.8 395.2)" stroke="#338233" stroke-width="0.25" font-family="Liberation Sans" textLength="8.8" lengthAdjust="spacingAndGlyphs">50</text>
<line x1="326.8" y1="364.8" x2="363" y2="364.8" stroke="#338233" stroke-width="1.1"/>
<line x1="326.8" y1="426" x2="377.6" y2="426" stroke="#338233" stroke-width="1.1"/>
<line x1="374.5" y1="304" x2="374.5" y2="426" stroke="#338233" stroke-width="1.1"/>
<polygon points="374.5,304.0 375.8,309.0 373.2,309.0" fill="#338233"/>
<polygon points="374.5,426.0 373.2,421.0 375.8,421.0" fill="#338233"/>
<text x="373.5" y="364.6" font-size="9.6" fill="#338233" text-anchor="middle" transform="rotate(-90 373.5 364.6)" stroke="#338233" stroke-width="0.25" font-family="Liberation Sans" textLength="11.7" lengthAdjust="spacingAndGlyphs">100</text>
<line x1="344.7" y1="401.8" x2="344.7" y2="437.8" stroke="#338233" stroke-width="1.1"/>
<polygon points="344.7,414.3 343.4,409.3 346.0,409.3" fill="#338233"/>
<polygon points="344.7,426.0 346.0,431.0 343.4,431.0" fill="#338233"/>
<text x="344.2" y="419" font-size="9.6" fill="#338233" text-anchor="middle" transform="rotate(-90 344.2 419)" stroke="#338233" stroke-width="0.25" font-family="Liberation Sans" textLength="8.2" lengthAdjust="spacingAndGlyphs">10</text>
<line x1="180" y1="414.3" x2="348" y2="414.3" stroke="#338233" stroke-width="1.1"/>
<line x1="186.6" y1="409" x2="186.6" y2="447" stroke="#338233" stroke-width="1.1"/>
<line x1="161" y1="439.4" x2="186.6" y2="413.8" stroke="#338233" stroke-width="1.1"/>
<polygon points="178.0,422.0 175.4,426.5 173.5,424.6" fill="#338233"/>
<text x="169" y="430.7" font-size="9.6" fill="#338233" text-anchor="middle" transform="rotate(-45 169 430.7)" stroke="#338233" stroke-width="0.25" font-family="Liberation Sans" textLength="13.2" lengthAdjust="spacingAndGlyphs">R10</text>
<line x1="186.6" y1="445" x2="326.8" y2="445" stroke="#338233" stroke-width="1.1"/>
<polygon points="186.6,445.0 191.6,443.7 191.6,446.3" fill="#338233"/>
<polygon points="326.8,445.0 321.8,446.3 321.8,443.7" fill="#338233"/>
<text x="257.2" y="444.3" font-size="9.6" fill="#338233" text-anchor="middle" stroke="#338233" stroke-width="0.25" font-family="Liberation Sans" textLength="10.8" lengthAdjust="spacingAndGlyphs">115</text>
<line x1="388" y1="278.7" x2="405.7" y2="278.7" stroke="#338233" stroke-width="1.1"/>
<polygon points="388.0,278.7 393.0,277.4 393.0,280.0" fill="#338233"/>
<polygon points="405.7,278.7 400.7,280.0 400.7,277.4" fill="#338233"/>
<text x="397.4" y="278.6" font-size="9.6" fill="#338233" text-anchor="middle" stroke="#338233" stroke-width="0.25" font-family="Liberation Sans" textLength="8.4" lengthAdjust="spacingAndGlyphs">15</text>
<line x1="388" y1="272" x2="388" y2="304" stroke="#338233" stroke-width="1.1"/>
<line x1="405.7" y1="272" x2="405.7" y2="304" stroke="#338233" stroke-width="1.1"/>
<path d="M523.3,212.8 L539.7,203.4 L618,249.2 L671,340.8 L671.6,401.3 L655.5,410.4 L534.8,340.8 Q523.3,334 523.3,322.7 Z M523.3,212.8 L602.2,257.8 L655.5,348.5 L655.5,410.4 M602.2,257.8 L618,249.2 M655.5,348.5 L671,340.8" fill="none" stroke="#333" stroke-width="1.1" stroke-linejoin="round"/>
<clipPath id="hc"><ellipse cx="572" cy="297" rx="33" ry="19.5" transform="rotate(58 572 297)"/></clipPath>
<ellipse cx="572" cy="297" rx="33" ry="19.5" transform="rotate(58 572 297)" fill="none" stroke="#333" stroke-width="1.1"/>
<g clip-path="url(#hc)"><ellipse cx="587.75" cy="288" rx="33" ry="19.5" transform="rotate(58 587.75 288)" fill="none" stroke="#333" stroke-width="1.1"/></g>
<rect x="10" y="104.5" width="1" height="1" fill="#d2d2d2"/><rect x="10" y="107" width="1" height="1" fill="#d2d2d2"/>
<rect x="13" y="104.5" width="1" height="1" fill="#d2d2d2"/><rect x="13" y="107" width="1" height="1" fill="#d2d2d2"/>
<rect x="16" y="104.5" width="1" height="1" fill="#d2d2d2"/><rect x="16" y="107" width="1" height="1" fill="#d2d2d2"/>
<rect x="19" y="104.5" width="1" height="1" fill="#d2d2d2"/><rect x="19" y="107" width="1" height="1" fill="#d2d2d2"/>
<rect x="22" y="104.5" width="1" height="1" fill="#d2d2d2"/><rect x="22" y="107" width="1" height="1" fill="#d2d2d2"/>
<path d="M9.5,116.5 L23,130" stroke="#505050" stroke-width="1.05"/>
<polygon points="21.8,129.8 26.2,129.8 24,132.3" fill="#111"/>
<circle cx="15.3" cy="147.3" r="7" fill="none" stroke="#505050" stroke-width="1.3"/>
<polygon points="21.8,154.8 26.2,154.8 24,157.3" fill="#111"/>
<path d="M9.5,171 q1.5,-6 4,-3 q2,3 2.5,8 q1,5 3,1 q0.5,-10 2.5,-10 q2,0 2,10" fill="none" stroke="#505050" stroke-width="1.2"/>
<polygon points="21.8,179.8 26.2,179.8 24,182.3" fill="#111"/>
<ellipse cx="15.5" cy="198" rx="5" ry="7.5" transform="rotate(30 15.5 198)" fill="none" stroke="#505050" stroke-width="1.2"/>
<polygon points="21.8,204.8 26.2,204.8 24,207.3" fill="#111"/>
<path d="M11,221 v5 q0,4 4,4 h7" fill="none" stroke="#505050" stroke-width="1.2"/>
<polygon points="21.8,230.8 26.2,230.8 24,233.3" fill="#111"/>
<rect x="9.5" y="241.5" width="11.5" height="6" rx="1" fill="none" stroke="#505050" stroke-width="1.1"/>
<path d="M11,249 l5,5" stroke="#444" stroke-width="1.2"/><circle cx="10" cy="250" r="1.3" fill="#2e8b57"/>
<polygon points="21.8,255.8 26.2,255.8 24,258.3" fill="#111"/>
<text x="13.5" y="273" font-size="7" font-weight="bold" fill="#222" font-family="Liberation Sans">A</text>
<path d="M9,276 h13 M9,273.5 v5 M22,273.5 v5" stroke="#333" stroke-width="1"/>
<polygon points="21.8,280.8 26.2,280.8 24,283.3" fill="#111"/>
<circle cx="15.5" cy="298" r="6.2" fill="none" stroke="#2e8b57" stroke-width="1.1"/><path d="M11.5,298 h8 M15.5,294 v8" stroke="#24cc70" stroke-width="2.2"/>
<polygon points="21.8,305.8 26.2,305.8 24,308.3" fill="#111"/>
<path d="M9,318 h13 M9,316 v4 M22,316 v4" stroke="#333" stroke-width="0.9"/><rect x="8.5" y="322" width="14" height="5.5" fill="#24cc70" stroke="#1d6e43" stroke-width="0.8"/><path d="M11,322 v2 M14,322 v2 M17,322 v2 M20,322 v2" stroke="#fff" stroke-width="0.6"/>
<polygon points="21.8,330.8 26.2,330.8 24,333.3" fill="#111"/>
<rect x="10" y="342.5" width="1" height="1" fill="#d2d2d2"/><rect x="10" y="345" width="1" height="1" fill="#d2d2d2"/>
<rect x="13" y="342.5" width="1" height="1" fill="#d2d2d2"/><rect x="13" y="345" width="1" height="1" fill="#d2d2d2"/>
<rect x="16" y="342.5" width="1" height="1" fill="#d2d2d2"/><rect x="16" y="345" width="1" height="1" fill="#d2d2d2"/>
<rect x="19" y="342.5" width="1" height="1" fill="#d2d2d2"/><rect x="19" y="345" width="1" height="1" fill="#d2d2d2"/>
<rect x="22" y="342.5" width="1" height="1" fill="#d2d2d2"/><rect x="22" y="345" width="1" height="1" fill="#d2d2d2"/>
<text x="7.5" y="367" font-size="14.5" fill="#111" stroke="#111" stroke-width="0.5" font-family="Liberation Sans">A</text><path d="M18.5,353.5 v13.5 M17,353.5 h3 M17,367 h3" stroke="#333" stroke-width="0.9"/>
<rect x="8.5" y="378.5" width="14" height="13.5" fill="#f4f4f4" stroke="#aaa" stroke-width="0.9"/><path d="M9,383 l4.5,-4.5 M9,388 l9.5,-9.5 M10.5,392 l12,-12 M15.5,392 l7,-7 M20,392 l2.5,-2.5" stroke="#999" stroke-width="0.9"/>
<rect x="9" y="404" width="13" height="9" rx="1" fill="none" stroke="#1d6e43" stroke-width="1"/><rect x="12" y="402.5" width="5" height="2" fill="#1d6e43"/><circle cx="15.5" cy="408.5" r="3" fill="#24cc70"/>
<rect x="9.5" y="428" width="13" height="8" rx="1.5" fill="none" stroke="#444" stroke-width="1"/><circle cx="10.5" cy="437" r="3" fill="#fff" stroke="#444" stroke-width="1"/><circle cx="22.5" cy="436" r="1.8" fill="#2e8b57"/>
<circle cx="15.5" cy="460.5" r="1.7" fill="#2e8b57"/>
<rect x="773" y="101" width="2" height="575" fill="#e2e2e2"/>
<rect x="979.5" y="104.5" width="8.5" height="8.5" rx="1.5" fill="#f4f4f4" stroke="#9a9a9a" stroke-width="1"/>
<rect x="981.3" y="107.5" width="3.5" height="3" fill="none" stroke="#555" stroke-width="0.8"/><rect x="982.8" y="106" width="3.5" height="3" fill="none" stroke="#555" stroke-width="0.8"/>
<rect x="990.0" y="104.5" width="8.5" height="8.5" rx="1.5" fill="#f4f4f4" stroke="#9a9a9a" stroke-width="1"/>
<path d="M992.0,106.5 l4.5,4.5 M996.5,106.5 l-4.5,4.5" stroke="#333" stroke-width="1.2"/>
<path d="M800,138 h2.5 M800.3,141.5 h2" stroke="#888" stroke-width="0.7"/>
<rect x="948.3" y="132" width="1" height="16.5" fill="#d6d6d6"/><rect x="949.3" y="132" width="13.5" height="16.6" fill="#f4f4f4"/><polygon points="952.5,139 959,139 955.8,142.2" fill="#555"/>
<defs><linearGradient id="rb" x1="0" y1="0" x2="1" y2="1"><stop offset="0" stop-color="#0f0"/><stop offset="0.5" stop-color="#08f"/><stop offset="1" stop-color="#f0f"/></linearGradient></defs><rect x="972" y="136.5" width="9" height="7.5" fill="url(#rb)" stroke="#222" stroke-width="0.8"/>
<rect x="875" y="403.5" width="1" height="1" fill="#d2d2d2"/><rect x="875" y="406" width="1" height="1" fill="#d2d2d2"/>
<rect x="878" y="403.5" width="1" height="1" fill="#d2d2d2"/><rect x="878" y="406" width="1" height="1" fill="#d2d2d2"/>
<rect x="881" y="403.5" width="1" height="1" fill="#d2d2d2"/><rect x="881" y="406" width="1" height="1" fill="#d2d2d2"/>
<rect x="884" y="403.5" width="1" height="1" fill="#d2d2d2"/><rect x="884" y="406" width="1" height="1" fill="#d2d2d2"/>
<rect x="887" y="403.5" width="1" height="1" fill="#d2d2d2"/><rect x="887" y="406" width="1" height="1" fill="#d2d2d2"/>
<rect x="890" y="403.5" width="1" height="1" fill="#d2d2d2"/><rect x="890" y="406" width="1" height="1" fill="#d2d2d2"/>
<rect x="893" y="403.5" width="1" height="1" fill="#d2d2d2"/><rect x="893" y="406" width="1" height="1" fill="#d2d2d2"/>
<rect x="979.5" y="410.5" width="8.5" height="8.5" rx="1.5" fill="#f4f4f4" stroke="#9a9a9a" stroke-width="1"/>
<rect x="981.3" y="413.5" width="3.5" height="3" fill="none" stroke="#555" stroke-width="0.8"/><rect x="982.8" y="412" width="3.5" height="3" fill="none" stroke="#555" stroke-width="0.8"/>
<rect x="990.0" y="410.5" width="8.5" height="8.5" rx="1.5" fill="#f4f4f4" stroke="#9a9a9a" stroke-width="1"/>
<path d="M992.0,412.5 l4.5,4.5 M996.5,412.5 l-4.5,4.5" stroke="#333" stroke-width="1.2"/>
<path d="M789.9,457 q5.2,-6.0 10.4,0 q-5.2,6.0 -10.4,0 z" fill="#3cb371" stroke="#1d6e43" stroke-width="1.3"/><circle cx="795.1" cy="457" r="1.9" fill="#0e3a22"/>
<path d="M821.1999999999999,457 q5.2,-6.0 10.4,0 q-5.2,6.0 -10.4,0 z" fill="#aaa" stroke="#999" stroke-width="1.1"/><circle cx="826.4" cy="457" r="1.9" fill="#7a7a7a"/>
<path d="M855.0,456.5 v-2 a2.6,2.6 0 0 1 5.2,0 v2" fill="none" stroke="#cdcdcd" stroke-width="1.5"/><rect x="853.6" y="456.2" width="8" height="6.8" rx="0.8" fill="#cdcdcd"/>
<path d="M886.6,456.5 v-2 a2.6,2.6 0 0 1 5.2,0 v2" fill="none" stroke="#000" stroke-width="1.5"/><rect x="885.2" y="456.2" width="8" height="6.8" rx="0.8" fill="#000"/>
<path d="M917.6,451.5 h5 v3.5 h3.5 v5 h-3.5 v3.5 h-5 v-3.5 h-3.5 v-5 h3.5 z" fill="#3ce08a" stroke="#1fae60" stroke-width="1"/>
<rect x="945.8" y="455.3" width="10" height="3.8" fill="#3ce08a" stroke="#1fae60" stroke-width="0.9"/>
<path d="M976.5,460.5 l5.5,-5.5 l3.5,3.5 l-5.5,5.5 z" fill="#3cb371" stroke="#1d6e43" stroke-width="0.9"/><path d="M980,453 l2.5,-2.5 l3.5,3.5 l-2.5,2.5 z" fill="#1d6e43"/><path d="M983,459 l3,3" stroke="#777" stroke-width="1.2"/>
<rect x="780.5" y="488.5" width="217.5" height="1" fill="#e2e2e2"/>
<rect x="867.5" y="474.2" width="21.5" height="14.3" fill="#000"/>
<path d="M784.06,480.3 q4.9399999999999995,-5.699999999999999 9.879999999999999,0 q-4.9399999999999995,5.699999999999999 -9.879999999999999,0 z" fill="#3cb371" stroke="#1d6e43" stroke-width="1.2349999999999999"/><circle cx="789" cy="480.3" r="1.805" fill="#0e3a22"/>
<path d="M808.4,479.1 v-2 a2.6,2.6 0 0 1 5.2,0 v2" fill="none" stroke="#cfcfcf" stroke-width="1.5"/><rect x="807" y="478.8" width="8" height="6.8" rx="0.8" fill="#cfcfcf"/>
<rect x="830" y="475.3" width="6" height="4.5" fill="#3cd67f" stroke="#1d6e43" stroke-width="0.6"/><rect x="828" y="479.3" width="10" height="5" rx="1" fill="#000"/><rect x="829.8" y="480.90000000000003" width="6.4" height="1.5" fill="#fff"/><rect x="830" y="482.8" width="6" height="2.8" fill="#3cd67f"/>
<path d="M852.5999999999999,475.7 v10 M857.0,475.7 v10 M849.4,478.7 h10.8 M849.4,482.7 h10.8" stroke="#777" stroke-width="1.5"/>
<rect x="780.5" y="503.3" width="217.5" height="1" fill="#e2e2e2"/>
<rect x="867.5" y="489.0" width="21.5" height="14.3" fill="#0000ff"/>
<path d="M784.06,495.1 q4.9399999999999995,-5.699999999999999 9.879999999999999,0 q-4.9399999999999995,5.699999999999999 -9.879999999999999,0 z" fill="#aaa" stroke="#999" stroke-width="1.045"/><circle cx="789" cy="495.1" r="1.805" fill="#7a7a7a"/>
<path d="M808.4,493.90000000000003 v-2 a2.6,2.6 0 0 1 5.2,0 v2" fill="none" stroke="#cfcfcf" stroke-width="1.5"/><rect x="807" y="493.6" width="8" height="6.8" rx="0.8" fill="#cfcfcf"/>
<rect x="830" y="490.1" width="6" height="4.5" fill="#3cd67f" stroke="#1d6e43" stroke-width="0.6"/><rect x="828" y="494.1" width="10" height="5" rx="1" fill="#000"/><rect x="829.8" y="495.70000000000005" width="6.4" height="1.5" fill="#fff"/><rect x="830" y="497.6" width="6" height="2.8" fill="#3cd67f"/>
<path d="M852.5999999999999,490.5 v10 M857.0,490.5 v10 M849.4,493.5 h10.8 M849.4,497.5 h10.8" stroke="#2ebd6e" stroke-width="1.9"/>
<rect x="780.5" y="518.1" width="217.5" height="1" fill="#e2e2e2"/>
<rect x="867.5" y="503.8" width="21.5" height="14.3" fill="#000"/>
<path d="M784.06,509.90000000000003 q4.9399999999999995,-5.699999999999999 9.879999999999999,0 q-4.9399999999999995,5.699999999999999 -9.879999999999999,0 z" fill="#3cb371" stroke="#1d6e43" stroke-width="1.2349999999999999"/><circle cx="789" cy="509.90000000000003" r="1.805" fill="#0e3a22"/>
<path d="M808.4,508.70000000000005 v-2 a2.6,2.6 0 0 1 5.2,0 v2" fill="none" stroke="#cfcfcf" stroke-width="1.5"/><rect x="807" y="508.40000000000003" width="8" height="6.8" rx="0.8" fill="#cfcfcf"/>
<rect x="830" y="504.90000000000003" width="6" height="4.5" fill="#3cd67f" stroke="#1d6e43" stroke-width="0.6"/><rect x="828" y="508.90000000000003" width="10" height="5" rx="1" fill="#000"/><rect x="829.8" y="510.50000000000006" width="6.4" height="1.5" fill="#fff"/><rect x="830" y="512.4000000000001" width="6" height="2.8" fill="#3cd67f"/>
<path d="M852.5999999999999,505.3 v10 M857.0,505.3 v10 M849.4,508.3 h10.8 M849.4,512.3 h10.8" stroke="#777" stroke-width="1.5"/>
<rect x="780.5" y="532.9" width="217.5" height="1" fill="#e2e2e2"/>
<rect x="867.5" y="518.6" width="21.5" height="14.3" fill="#000"/>
<path d="M784.06,524.7 q4.9399999999999995,-5.699999999999999 9.879999999999999,0 q-4.9399999999999995,5.699999999999999 -9.879999999999999,0 z" fill="#3cb371" stroke="#1d6e43" stroke-width="1.2349999999999999"/><circle cx="789" cy="524.7" r="1.805" fill="#0e3a22"/>
<path d="M808.4,523.5 v-2 a2.6,2.6 0 0 1 5.2,0 v2" fill="none" stroke="#cfcfcf" stroke-width="1.5"/><rect x="807" y="523.2" width="8" height="6.8" rx="0.8" fill="#cfcfcf"/>
<rect x="830" y="519.7" width="6" height="4.5" fill="#3cd67f" stroke="#1d6e43" stroke-width="0.6"/><rect x="828" y="523.7" width="10" height="5" rx="1" fill="#000"/><rect x="829.8" y="525.3000000000001" width="6.4" height="1.5" fill="#fff"/><rect x="830" y="527.2" width="6" height="2.8" fill="#3cd67f"/>
<path d="M852.5999999999999,520.1 v10 M857.0,520.1 v10 M849.4,523.1 h10.8 M849.4,527.1 h10.8" stroke="#777" stroke-width="1.5"/>
<rect x="780.5" y="547.6999999999999" width="217.5" height="1" fill="#e2e2e2"/>
<rect x="867.5" y="533.4" width="21.5" height="14.3" fill="#007f00"/>
<path d="M784.06,539.5 q4.9399999999999995,-5.699999999999999 9.879999999999999,0 q-4.9399999999999995,5.699999999999999 -9.879999999999999,0 z" fill="#3cb371" stroke="#1d6e43" stroke-width="1.2349999999999999"/><circle cx="789" cy="539.5" r="1.805" fill="#0e3a22"/>
<path d="M808.4,538.3 v-2 a2.6,2.6 0 0 1 5.2,0 v2" fill="none" stroke="#cfcfcf" stroke-width="1.5"/><rect x="807" y="538.0" width="8" height="6.8" rx="0.8" fill="#cfcfcf"/>
<rect x="830" y="534.5" width="6" height="4.5" fill="#3cd67f" stroke="#1d6e43" stroke-width="0.6"/><rect x="828" y="538.5" width="10" height="5" rx="1" fill="#000"/><rect x="829.8" y="540.1" width="6.4" height="1.5" fill="#fff"/><rect x="830" y="542.0" width="6" height="2.8" fill="#3cd67f"/>
<path d="M852.5999999999999,534.9 v10 M857.0,534.9 v10 M849.4,537.9 h10.8 M849.4,541.9 h10.8" stroke="#777" stroke-width="1.5"/>
<rect x="780.5" y="562.5" width="217.5" height="1" fill="#e2e2e2"/>
<rect x="867.5" y="548.2" width="21.5" height="14.3" fill="#000"/>
<path d="M784.06,554.3000000000001 q4.9399999999999995,-5.699999999999999 9.879999999999999,0 q-4.9399999999999995,5.699999999999999 -9.879999999999999,0 z" fill="#3cb371" stroke="#1d6e43" stroke-width="1.2349999999999999"/><circle cx="789" cy="554.3000000000001" r="1.805" fill="#0e3a22"/>
<path d="M808.4,553.1 v-2 a2.6,2.6 0 0 1 5.2,0 v2" fill="none" stroke="#cfcfcf" stroke-width="1.5"/><rect x="807" y="552.8000000000001" width="8" height="6.8" rx="0.8" fill="#cfcfcf"/>
<rect x="830" y="549.3000000000001" width="6" height="4.5" fill="#3cd67f" stroke="#1d6e43" stroke-width="0.6"/><rect x="828" y="553.3000000000001" width="10" height="5" rx="1" fill="#000"/><rect x="829.8" y="554.9000000000001" width="6.4" height="1.5" fill="#fff"/><rect x="830" y="556.8000000000001" width="6" height="2.8" fill="#3cd67f"/>
<path d="M852.5999999999999,549.7 v10 M857.0,549.7 v10 M849.4,552.7 h10.8 M849.4,556.7 h10.8" stroke="#777" stroke-width="1.5"/>
<rect x="801.6" y="474" width="1" height="88.8" fill="#e2e2e2"/>
<rect x="823.7" y="474" width="1" height="88.8" fill="#e2e2e2"/>
<rect x="846.2" y="474" width="1" height="88.8" fill="#e2e2e2"/>
<rect x="885" y="604.5" width="1" height="1" fill="#d2d2d2"/><rect x="885" y="607" width="1" height="1" fill="#d2d2d2"/>
<rect x="888" y="604.5" width="1" height="1" fill="#d2d2d2"/><rect x="888" y="607" width="1" height="1" fill="#d2d2d2"/>
<rect x="891" y="604.5" width="1" height="1" fill="#d2d2d2"/><rect x="891" y="607" width="1" height="1" fill="#d2d2d2"/>
<rect x="894" y="604.5" width="1" height="1" fill="#d2d2d2"/><rect x="894" y="607" width="1" height="1" fill="#d2d2d2"/>
<rect x="979.5" y="613.5" width="8.5" height="8.5" rx="1.5" fill="#f4f4f4" stroke="#9a9a9a" stroke-width="1"/>
<rect x="981.3" y="616.5" width="3.5" height="3" fill="none" stroke="#555" stroke-width="0.8"/><rect x="982.8" y="615" width="3.5" height="3" fill="none" stroke="#555" stroke-width="0.8"/>
<rect x="990.0" y="613.5" width="8.5" height="8.5" rx="1.5" fill="#f4f4f4" stroke="#9a9a9a" stroke-width="1"/>
<path d="M992.0,615.5 l4.5,4.5 M996.5,615.5 l-4.5,4.5" stroke="#333" stroke-width="1.2"/>
<rect x="987.5" y="626.8" width="10.5" height="15.5" fill="#f2f2f2"/><polygon points="990,632 996,632 993,628.8" fill="#444"/><polygon points="990,637 996,637 993,640.2" fill="#444"/>
<path d="M987,664 h4 M987,666.5 h4 M987,669 h4" stroke="#999" stroke-width="0.7"/>
<rect x="2.5" y="682" width="1" height="1" fill="#d2d2d2"/><rect x="5" y="682" width="1" height="1" fill="#d2d2d2"/>
<rect x="2.5" y="685" width="1" height="1" fill="#d2d2d2"/><rect x="5" y="685" width="1" height="1" fill="#d2d2d2"/>
<rect x="2.5" y="688" width="1" height="1" fill="#d2d2d2"/><rect x="5" y="688" width="1" height="1" fill="#d2d2d2"/>
<rect x="2.5" y="691" width="1" height="1" fill="#d2d2d2"/><rect x="5" y="691" width="1" height="1" fill="#d2d2d2"/>
<rect x="2.5" y="694" width="1" height="1" fill="#d2d2d2"/><rect x="5" y="694" width="1" height="1" fill="#d2d2d2"/>
<rect x="2.5" y="697" width="1" height="1" fill="#d2d2d2"/><rect x="5" y="697" width="1" height="1" fill="#d2d2d2"/>
<path d="M41.5,691 h13.5 M48.2,684 v14" stroke="#999" stroke-width="1.1" stroke-dasharray="1.4,1.2"/><circle cx="48.2" cy="691" r="1.3" fill="#888"/>
<circle cx="69.2" cy="685.2" r="1.5" fill="#2e8b57"/>
<circle cx="69.2" cy="689.3000000000001" r="1.5" fill="#2e8b57"/>
<circle cx="69.2" cy="693.4000000000001" r="1.5" fill="#2e8b57"/>
<circle cx="69.2" cy="697.5" r="1.5" fill="#2e8b57"/>
<circle cx="74.2" cy="685.2" r="1.5" fill="#2e8b57"/>
<circle cx="74.2" cy="689.3000000000001" r="1.5" fill="#2e8b57"/>
<circle cx="74.2" cy="693.4000000000001" r="1.5" fill="#2e8b57"/>
<circle cx="74.2" cy="697.5" r="1.5" fill="#2e8b57"/>
<circle cx="79.2" cy="685.2" r="1.5" fill="#2e8b57"/>
<circle cx="79.2" cy="689.3000000000001" r="1.5" fill="#2e8b57"/>
<circle cx="79.2" cy="693.4000000000001" r="1.5" fill="#2e8b57"/>
<circle cx="79.2" cy="697.5" r="1.5" fill="#2e8b57"/>
<path d="M94,688 q5,1 8,5 q2,3 4,4" fill="none" stroke="#555" stroke-width="1"/>
<circle cx="97.2" cy="684.2" r="1.7" fill="#3cb371" stroke="#1d6e43" stroke-width="0.8"/>
<circle cx="94.2" cy="688" r="1.7" fill="#3cb371" stroke="#1d6e43" stroke-width="0.8"/>
<circle cx="106.5" cy="694.5" r="1.7" fill="#3cb371" stroke="#1d6e43" stroke-width="0.8"/>
<circle cx="103" cy="698" r="1.7" fill="#3cb371" stroke="#1d6e43" stroke-width="0.8"/>
<path d="M119,689 l4,-4 M119,689 q5,1 8,4 q2,2 5,1 M127,693 l1,4.5" fill="none" stroke="#555" stroke-width="0.9"/>
<circle cx="123" cy="684.5" r="1.7" fill="#3cb371" stroke="#1d6e43" stroke-width="0.8"/>
<circle cx="119" cy="689" r="1.7" fill="#3cb371" stroke="#1d6e43" stroke-width="0.8"/>
<circle cx="126" cy="687.8" r="1.7" fill="#3cb371" stroke="#1d6e43" stroke-width="0.8"/>
<circle cx="128.2" cy="690.5" r="1.7" fill="#3cb371" stroke="#1d6e43" stroke-width="0.8"/>
<circle cx="130.5" cy="692.5" r="1.7" fill="#3cb371" stroke="#1d6e43" stroke-width="0.8"/>
<circle cx="132.5" cy="694.5" r="1.7" fill="#3cb371" stroke="#1d6e43" stroke-width="0.8"/>
<circle cx="128" cy="697.8" r="1.7" fill="#3cb371" stroke="#1d6e43" stroke-width="0.8"/>
<path d="M144.5,688.5 q6,1 9,4 q2,3 2,6 M149,683.5 l10.5,10.5" fill="none" stroke="#555" stroke-width="1"/>
<circle cx="154.2" cy="688.7" r="1.8" fill="#3cb371" stroke="#1d6e43" stroke-width="0.8"/>
<circle cx="146" cy="697.2" r="1.8" fill="#3cb371" stroke="#1d6e43" stroke-width="0.8"/>
<path d="M170.5,688 q6,0.5 8.5,3.5 q2,3 2,7 M175,683.5 l10.5,11" fill="none" stroke="#555" stroke-width="1"/>
<circle cx="179.8" cy="689.2" r="1.8" fill="#3cb371" stroke="#1d6e43" stroke-width="0.8"/>
<circle cx="177.8" cy="692" r="1.8" fill="#3cb371" stroke="#1d6e43" stroke-width="0.8"/>
<path d="M198.5,683.5 l11.5,11.5 M196,689 q5,1 7.5,4 q2,3 3,5" fill="none" stroke="#555" stroke-width="1"/>
<circle cx="203.2" cy="688" r="1.7" fill="#3cb371" stroke="#1d6e43" stroke-width="0.8"/>
<circle cx="205" cy="694.3" r="1.7" fill="#3cb371" stroke="#1d6e43" stroke-width="0.8"/>
<polygon points="206.2,687.5 209.8,685.3 209.8,689.7" fill="#2e8b57"/><polygon points="202,694 198.4,691.8 198.4,696.2" fill="#2e8b57"/>
<path d="M223.5,684.5 l12,12 M235.5,684.5 l-12,12" stroke="#555" stroke-width="1"/>
<rect x="227.8" y="688.8" width="3.6" height="3.6" fill="#3cb371" stroke="#1d6e43" stroke-width="0.8"/>
<rect x="245" y="682" width="1" height="18" fill="#d4d4d4"/>
<path d="M253,691 h14" stroke="#9ee6bf" stroke-width="3.5"/><path d="M253,691 h14" stroke="#1d6e43" stroke-width="1.2"/>
<circle cx="260" cy="691" r="1.9" fill="#3cb371" stroke="#1d6e43" stroke-width="0.8"/>
<path d="M285.5,683.5 v15" stroke="#9ee6bf" stroke-width="3.5"/><path d="M285.5,683.5 v15" stroke="#1d6e43" stroke-width="1.2"/>
<circle cx="285.5" cy="691" r="1.9" fill="#3cb371" stroke="#1d6e43" stroke-width="0.8"/>
<path d="M304,691 h14 M311,683.5 v15" stroke="#9ee6bf" stroke-width="3.5"/><path d="M304,691 h14 M311,683.5 v15" stroke="#1d6e43" stroke-width="1.2"/>
<circle cx="311" cy="691" r="1.6" fill="#3cb371" stroke="#1d6e43" stroke-width="0.8"/>
<rect x="328" y="682" width="1" height="18" fill="#d4d4d4"/>
<path d="M336.8,694.8 l5,-5 l3.2,3.2 l-5,5 z" fill="#fff" stroke="#444" stroke-width="0.9"/>
<path d="M345,685 v10 M340,690 h10" stroke="#555" stroke-width="0.8"/><path d="M345,687 l3,3 l-3,3 l-3,-3 z" fill="#3cb371" stroke="#1d6e43" stroke-width="0.9"/>
<rect x="361.3" y="686.5" width="7" height="5.5" fill="#000"/><path d="M362.8,686.8 v-1.2 a2,2 0 0 1 4,0 v1.2" fill="none" stroke="#000" stroke-width="1.3"/>
<path d="M364.5,699 l5,-5 l3.2,3.2 l-5,5 z" fill="#fff" stroke="#444" stroke-width="0.9"/>
<path d="M372.5,689 v10 M367.5,694 h10" stroke="#555" stroke-width="0.8"/><path d="M372.5,691 l3,3 l-3,3 l-3,-3 z" fill="#3cb371" stroke="#1d6e43" stroke-width="0.9"/>
<rect x="387.5" y="682" width="1" height="1" fill="#d2d2d2"/><rect x="390" y="682" width="1" height="1" fill="#d2d2d2"/>
<rect x="387.5" y="685" width="1" height="1" fill="#d2d2d2"/><rect x="390" y="685" width="1" height="1" fill="#d2d2d2"/>
<rect x="387.5" y="688" width="1" height="1" fill="#d2d2d2"/><rect x="390" y="688" width="1" height="1" fill="#d2d2d2"/>
<rect x="387.5" y="691" width="1" height="1" fill="#d2d2d2"/><rect x="390" y="691" width="1" height="1" fill="#d2d2d2"/>
<rect x="387.5" y="694" width="1" height="1" fill="#d2d2d2"/><rect x="390" y="694" width="1" height="1" fill="#d2d2d2"/>
<rect x="387.5" y="697" width="1" height="1" fill="#d2d2d2"/><rect x="390" y="697" width="1" height="1" fill="#d2d2d2"/>
<defs><linearGradient id="gl" x1="0" x2="1"><stop offset="0" stop-color="#24dd78"/><stop offset="1" stop-color="#fff"/></linearGradient><linearGradient id="gr" x1="0" x2="1"><stop offset="0.55" stop-color="#cfcfcf"/><stop offset="1" stop-color="#24dd78"/></linearGradient><linearGradient id="gt" x1="0" y1="0" x2="0" y2="1"><stop offset="0" stop-color="#24dd78"/><stop offset="1" stop-color="#fff"/></linearGradient><linearGradient id="gb" x1="0" y1="0" x2="0" y2="1"><stop offset="0" stop-color="#fff"/><stop offset="1" stop-color="#24dd78"/></linearGradient></defs>
<rect x="400.6" y="685.6" width="13" height="9.5" rx="0.8" fill="url(#gl)" stroke="#555" stroke-width="1.2"/><rect x="405" y="695.5" width="4" height="1.5" fill="#222"/><rect x="403.5" y="696.6" width="7" height="1" fill="#222"/>
<rect x="426.6" y="685.6" width="13" height="9.5" rx="0.8" fill="url(#gr)" stroke="#555" stroke-width="1.2"/><rect x="431" y="695.5" width="4" height="1.5" fill="#222"/><rect x="429.5" y="696.6" width="7" height="1" fill="#222"/>
<rect x="452.40000000000003" y="685.6" width="13" height="9.5" rx="0.8" fill="url(#gt)" stroke="#555" stroke-width="1.2"/><rect x="456.8" y="695.5" width="4" height="1.5" fill="#222"/><rect x="455.3" y="696.6" width="7" height="1" fill="#222"/>
<rect x="478.40000000000003" y="685.6" width="13" height="9.5" rx="0.8" fill="url(#gb)" stroke="#555" stroke-width="1.2"/><rect x="482.8" y="695.5" width="4" height="1.5" fill="#222"/><rect x="481.3" y="696.6" width="7" height="1" fill="#222"/>
<rect x="504.40000000000003" y="685.6" width="13" height="9.5" rx="0.8" fill="#fff" stroke="#555" stroke-width="1.2"/><rect x="508.8" y="695.5" width="4" height="1.5" fill="#222"/><rect x="507.3" y="696.6" width="7" height="1" fill="#222"/>
<rect x="506.5" y="687.5" width="5" height="3.5" fill="#24dd78"/>
<rect x="529.5" y="682" width="1" height="1" fill="#d2d2d2"/><rect x="532" y="682" width="1" height="1" fill="#d2d2d2"/>
<rect x="529.5" y="685" width="1" height="1" fill="#d2d2d2"/><rect x="532" y="685" width="1" height="1" fill="#d2d2d2"/>
<rect x="529.5" y="688" width="1" height="1" fill="#d2d2d2"/><rect x="532" y="688" width="1" height="1" fill="#d2d2d2"/>
<rect x="529.5" y="691" width="1" height="1" fill="#d2d2d2"/><rect x="532" y="691" width="1" height="1" fill="#d2d2d2"/>
<rect x="529.5" y="694" width="1" height="1" fill="#d2d2d2"/><rect x="532" y="694" width="1" height="1" fill="#d2d2d2"/>
<rect x="529.5" y="697" width="1" height="1" fill="#d2d2d2"/><rect x="532" y="697" width="1" height="1" fill="#d2d2d2"/>
<path d="M540.5,691 h7 M544,687.5 v7" stroke="#000" stroke-width="2.2"/><rect x="549.5" y="684" width="7" height="14" fill="#fff" stroke="#888" stroke-width="0.9"/><path d="M551,687 h4 M551,689.5 h4 M551,692 h4 M551,694.5 h4" stroke="#999" stroke-width="0.7"/>
<path d="M566.5,691 h7 M570,687.5 v7" stroke="#000" stroke-width="2.2"/><rect x="575" y="684" width="7.5" height="14" fill="#fff" stroke="#5a9a78" stroke-width="0.9"/><path d="M575,691 h7.5 M576.5,689.5 l4.5,-4.5" stroke="#5a9a78" stroke-width="0.8"/><circle cx="578.8" cy="694.5" r="2" fill="none" stroke="#5a9a78" stroke-width="0.8"/>
<rect x="0" y="705" width="1000" height="1" fill="#d6d6d6"/>
<rect x="149.5" y="709" width="1" height="39" fill="#c8c8c8"/>
<path d="M396.5,716.5 q5,4 9,3.5 q4,-0.5 6,-10" fill="none" stroke="#000" stroke-width="2"/>
<path d="M415,751 v-32 q0,-5.5 5.5,-5.5 h18 q5.5,0 5.5,5.5 v32" fill="#fff" stroke="#000" stroke-width="2.6"/>
<path d="M415,729 h29 M424.5,713.5 v15.5 M434,713.5 v15.5 M429.2,709 v4.5" stroke="#000" stroke-width="2"/>
<rect x="425.5" y="714" width="7.5" height="14" fill="#22ee77"/>
</svg>

</body></html>
